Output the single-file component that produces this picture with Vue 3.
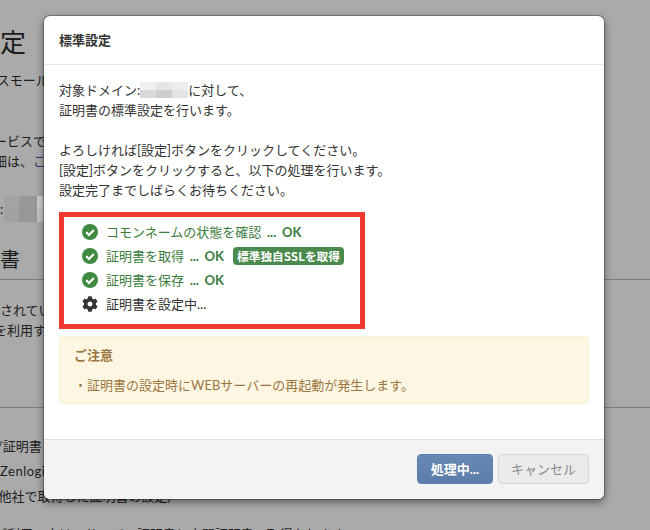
<script setup>
const mosaic = ['#a5a3a2', '#999897', '#cfcfcf', '#a3a2a1', '#989796', '#c6c6c6']
const domainMosaic = ['#f0f0f0', '#e6e6e6', '#ececec', '#d8d8d8', '#cdcdcd', '#e4e4e4']
const steps = [
  { label: 'コモンネームの状態を確認' },
  { label: '証明書を取得', badge: '標準独自SSLを取得' },
  { label: '証明書を保存' },
]
</script>

<template>
  <div class="page">
    <div class="bg">
      <h1 class="bg-title">標準設定</h1>
      <p class="bg-line l-small">SSLスモール</p>
      <p class="bg-line l-service">本サービスで</p>
      <p class="bg-line l-detail">詳細は、<span class="link">こ</span></p>
      <div class="bg-domain">
        <span>:</span>
        <div class="bg-mosaic">
          <i v-for="(c, i) in mosaic" :key="i" :style="{ background: c }"></i>
        </div>
      </div>
      <h2 class="bg-head">証明書</h2>
      <p class="bg-line l-set">設定されてい</p>
      <p class="bg-line l-use">を利用す</p>
      <div class="bg-rule"></div>
      <p class="bg-line l-a">SSL/証明書</p>
      <p class="bg-line l-b">Zenlogic</p>
      <p class="bg-line l-c">(他社で取得した証明書の設定)</p>
      <p class="bg-line l-d">ご利用の方は、サーバー証明書と中間証明書の取得をします</p>
    </div>

    <div class="modal">
      <header class="modal-head">標準設定</header>
      <div class="modal-body">
        <p class="intro">
          対象ドメイン:<span class="domain-mosaic"><i v-for="(c, i) in domainMosaic" :key="i" :style="{ background: c }"></i></span>に対して、<br>
          証明書の標準設定を行います。<br><br>
          よろしければ[設定]ボタンをクリックしてください。<br>
          [設定]ボタンをクリックすると、以下の処理を行います。<br>
          設定完了までしばらくお待ちください。
        </p>
        <div class="steps">
          <div v-for="s in steps" :key="s.label" class="step ok">
            <svg class="ico" viewBox="0 0 16 16">
              <circle cx="8" cy="8" r="8" fill="#3f8a43" />
              <path d="M4.2 8.3 7 11l4.9-5" fill="none" stroke="#fff" stroke-width="2.2" />
            </svg>
            <span>{{ s.label }}<b class="result">&nbsp;... OK</b></span>
            <span v-if="s.badge" class="badge">{{ s.badge }}</span>
          </div>
          <div class="step">
            <svg class="ico" viewBox="0 0 512 512">
              <path fill="#333" d="M487.4 315.7l-42.6-24.6c4.3-23.2 4.3-47 0-70.2l42.6-24.6c4.9-2.8 7.1-8.6 5.5-14-11.1-35.6-30-67.8-54.7-94.6-3.8-4.1-10-5.1-14.8-2.3L380.8 110c-17.9-15.4-38.5-27.3-60.8-35.1V25.8c0-5.6-3.9-10.5-9.4-11.7-36.7-8.2-74.3-7.8-109.2 0-5.5 1.2-9.4 6.1-9.4 11.7V75c-22.2 7.9-42.8 19.8-60.8 35.1L88.7 85.5c-4.9-2.8-11-1.9-14.8 2.3-24.7 26.7-43.6 58.9-54.7 94.6-1.7 5.4.6 11.2 5.5 14L67.3 221c-4.3 23.2-4.3 47 0 70.2l-42.6 24.6c-4.9 2.8-7.1 8.6-5.5 14 11.1 35.6 30 67.8 54.7 94.6 3.8 4.1 10 5.1 14.8 2.3l42.6-24.6c17.9 15.4 38.5 27.3 60.8 35.1v49.2c0 5.6 3.9 10.5 9.4 11.7 36.7 8.2 74.3 7.8 109.2 0 5.5-1.2 9.4-6.1 9.4-11.7v-49.2c22.2-7.9 42.8-19.8 60.8-35.1l42.6 24.6c4.9 2.8 11 1.9 14.8-2.3 24.7-26.7 43.6-58.9 54.7-94.6 1.5-5.5-.7-11.3-5.6-14.1zM256 336c-44.1 0-80-35.9-80-80s35.9-80 80-80 80 35.9 80 80-35.9 80-80 80z" />
            </svg>
            <span>証明書を設定中...</span>
          </div>
        </div>
        <div class="notice">
          <div class="notice-title">ご注意</div>
          <div class="notice-text">・証明書の設定時にWEBサーバーの再起動が発生します。</div>
        </div>
      </div>
      <footer class="modal-foot">
        <button class="btn primary">処理中...</button>
        <button class="btn cancel">キャンセル</button>
      </footer>
    </div>
  </div>
</template>

<style>
html, body { margin: 0; padding: 0; }
</style>

<style scoped>
.page {
  position: relative;
  width: 650px;
  height: 530px;
  overflow: hidden;
  background: #aaaaaa;
  color: #1c1c1c;
  font-family: Lato, "Noto Sans CJK JP", sans-serif;
  font-size: 13px;
  line-height: 20px;
}
p, h1, h2 { margin: 0; font-weight: 400; white-space: nowrap; }
.bg { display: flex; flex-direction: column; height: 100%; }
.bg-title { font-size: 26px; line-height: 36px; margin: 24px 0 0 -78px; }
.bg-line { font-size: 13px; flex: none; }
.l-small { margin: 10px 0 0 -24px; }
.l-service { margin: 41px 0 0 -32px; }
.l-detail { margin: 0 0 0 -19px; }
.bg-domain { display: flex; align-items: center; margin-top: 25px; height: 26px; flex: none; }
.bg-mosaic { display: grid; grid-template-columns: 15px 18px 7px; grid-auto-rows: 13px; margin-left: 1px; }
.link { color: #2a3f73; }
.bg-head { font-size: 20px; line-height: 30px; margin: 22px 0 0 -40px; padding-bottom: 5px; border-bottom: 1px solid #7c7c7c; width: 690px; flex: none; }
.l-set { margin: 20px 0 0 -26px; }
.l-use { margin: 0 0 0 -6px; }
.bg-rule { border-top: 1px solid #7c7c7c; margin-top: 67px; flex: none; }
.l-a { margin: 28px 0 0 -24px; }
.l-b { margin: 5px 0 0 0; letter-spacing: 0.5px; }
.l-c { margin: 5px 0 0 -5px; }
.l-d { margin: 18px 0 0 -6px; }

.modal {
  position: absolute;
  left: 44px;
  top: 16px;
  width: 560px;
  height: 483px;
  display: flex;
  flex-direction: column;
  background: #fff;
  border-radius: 6px;
  overflow: hidden;
  box-shadow: 0 0 0 1px rgba(0, 0, 0, 0.25), 0 3px 9px rgba(0, 0, 0, 0.5);
  color: #333;
}
.modal-head {
  height: 49px;
  flex: none;
  box-sizing: border-box;
  padding: 14px 15px 0;
  font-size: 13px;
  font-weight: 700;
  border-bottom: 1px solid #e5e5e5;
}
.modal-body { flex: 1; padding: 15px 15px 0; }
.intro { white-space: normal; }
.domain-mosaic {
  display: inline-grid;
  grid-template-columns: repeat(3, 16px);
  grid-auto-rows: 8px;
  vertical-align: top;
  margin-top: 2px;
}
.steps {
  box-sizing: border-box;
  width: 306px;
  height: 117px;
  margin-top: 12px;
  padding: 3px 0 0 18px;
  border: 5px solid #ee3a2e;
}
.step { display: flex; align-items: center; gap: 8px; height: 24px; }
.ok { color: #3c7d40; }
.result { font-weight: 700; word-spacing: 2.5px; }
.ico { width: 16px; height: 16px; flex: none; }
.badge {
  display: block;
  margin-left: 1px;
  padding: 0 4px;
  height: 18px;
  line-height: 18px;
  border-radius: 4px;
  background: #4a8a4c;
  color: #fff;
  font-family: "Noto Sans CJK JP", sans-serif;
  font-size: 11.7px;
  font-weight: 700;
}
.notice {
  box-sizing: border-box;
  height: 68px;
  margin-top: 7px;
  padding: 8px 14px;
  background: #fdf6e3;
  border: 1px solid #faefd4;
  border-radius: 4px;
  color: #9c763f;
}
.notice-title { font-weight: 700; }
.notice-text { margin-top: 10px; }
.modal-foot {
  flex: none;
  box-sizing: border-box;
  height: 60px;
  display: flex;
  justify-content: flex-end;
  gap: 5px;
  padding: 14px 15px 0;
  background: #f3f3f3;
  border-top: 1px solid #ddd;
}
.btn {
  box-sizing: border-box;
  height: 30px;
  border-radius: 4px;
  font: inherit;
  padding: 0;
}
.primary {
  width: 76px;
  color: #fff;
  font-weight: 700;
  border: 1px solid #5d80b0;
  background: linear-gradient(#6888b3, #5c7dab);
}
.cancel {
  width: 91px;
  color: #8a8a8a;
  border: 1px solid #d6d6d6;
  background: #ebebeb;
}
</style>
